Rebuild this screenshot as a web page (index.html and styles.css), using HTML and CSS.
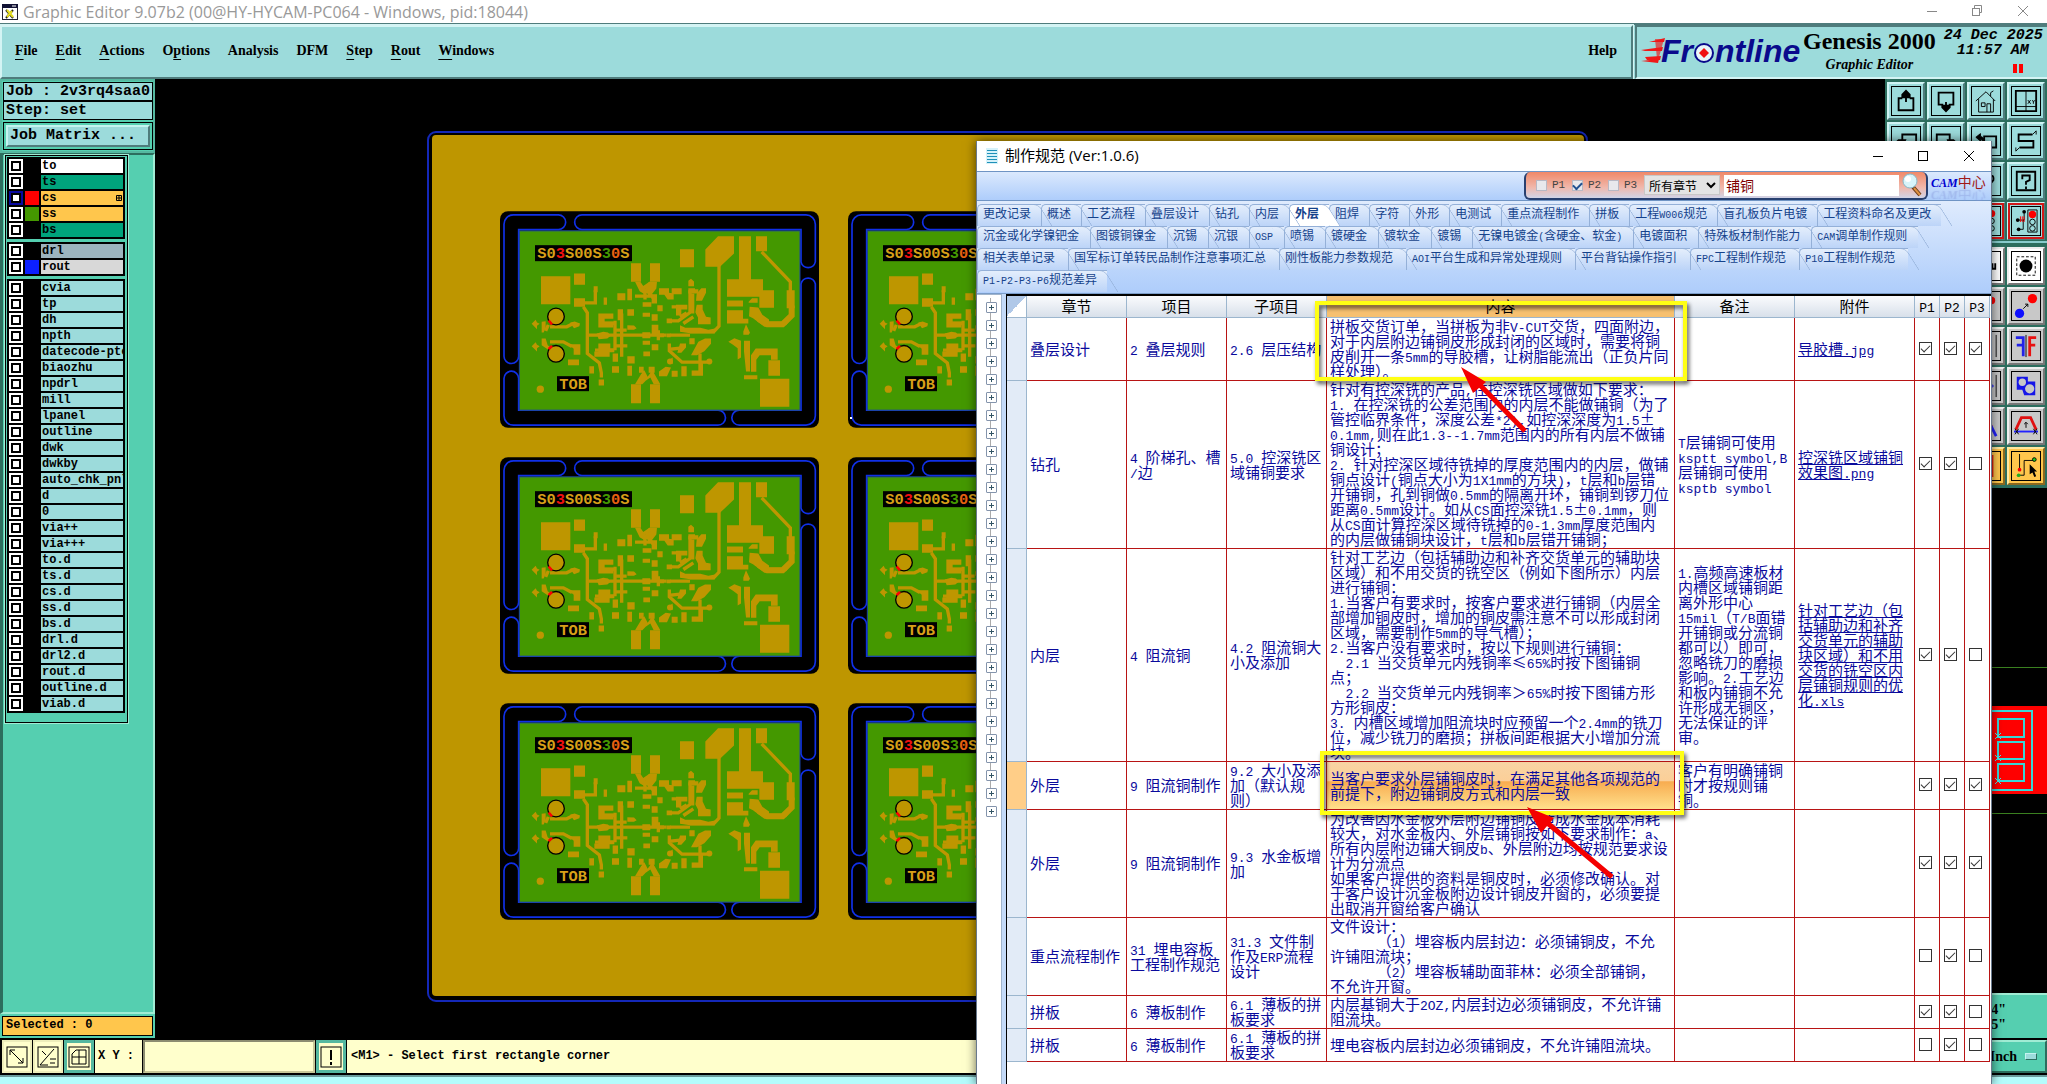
FILE: index.html
```html
<!DOCTYPE html>
<html lang="zh-CN">
<head>
<meta charset="utf-8">
<title>Graphic Editor 9.07b2</title>
<link rel="stylesheet" href="styles.css">
</head>
<body>
<header class="titlebar">
  <svg width="16" height="16" viewBox="0 0 16 16"><rect x=".5" y=".5" width="15" height="15" fill="#fff" stroke="#223"/><rect width="16" height="4" fill="#113"/><path d="M10 2h4" stroke="#fff"/><path d="M4 6l7 8M11 6l-7 8" stroke="#222" stroke-width="2"/><path d="M5 6l6 7M10 7l-5 6" stroke="#e8e020" stroke-width="2"/></svg>
  <span class="caption">Graphic Editor 9.07b2 (00@HY-HYCAM-PC064 - Windows, pid:18044)</span>
  <svg class="wincontrols" width="106" height="20" viewBox="0 0 106 20" fill="none" stroke="#888"><path d="M3 9.500h10M94 4l10 10M104 4l-10 10M50.500 6.500v-3h7v7h-2"/><rect x="48.500" y="6.500" width="7" height="7"/></svg>
</header>

<div class="menurow">
  <nav class="menubar">
    <button><u>F</u>ile</button><button><u>E</u>dit</button><button><u>A</u>ctions</button><button>O<u>p</u>tions</button><button>Analysis</button><button>DFM</button><button><u>S</u>tep</button><button><u>R</u>out</button><button><u>W</u>indows</button><button class="help">Help</button>
  </nav>
  <section class="brand">
    <svg width="162" height="44" viewBox="0 -5 162 44">
      <g fill="#f01818"><path d="M4 7l20-5-1 4H8zM0 14l22-3-1 4H4zM4 21l16-1-1 4H6zM0 25l18-2-1 4z"/><path d="M14 3h9l-6 22h-7l6-2z" opacity=".65"/></g>
      <g class="logo"><text x="20" y="26">Fr</text><text x="74" y="26">ntline</text></g>
      <circle cx="63" cy="17" r="9" fill="#e8f6f8" stroke="#0a0a8c" stroke-width="2"/><path d="M63 12l5 5-5 5-5-5z" fill="#f01010"/>
    </svg>
    <div class="product"><strong>Genesis 2000</strong><em>Graphic Editor</em></div>
    <div class="clock"><time>24 Dec 2025</time><time>11:57 AM</time><span class="pause"></span></div>
  </section>
</div>

<main class="workspace">
  <aside class="left">
    <div class="job">
      <div class="jobline">Job : 2v3rq4saa0</div>
      <div class="jobline">Step: set</div>
      <div class="matrix"><button>Job Matrix ...</button></div>
    </div>
    <div class="layerarea">
      <div class="layerframe">
        <div class="group">
          <label class="white"><input type="checkbox"><i></i><span>to</span></label>
          <label class="mask"><input type="checkbox"><i></i><span>ts</span></label>
          <label class="signal active"><input type="checkbox"><i class="red"></i><span>cs<svg width="8" height="14" viewBox="0 0 8 14" fill="none" stroke="#000"><path d="M1.500 4.500h5v5h-5zM4 4.500v5M1.500 7h5"/></svg></span></label>
          <label class="signal"><input type="checkbox"><i class="green"></i><span>ss</span></label>
          <label class="mask"><input type="checkbox"><i></i><span>bs</span></label>
        </div>
        <div class="group">
          <label class="drill"><input type="checkbox"><i></i><span>drl</span></label>
          <label class="rout"><input type="checkbox"><i class="blue"></i><span>rout</span></label>
        </div>
        <div class="group">
          <label><input type="checkbox"><i></i><span>cvia</span></label>
          <label><input type="checkbox"><i></i><span>tp</span></label>
          <label><input type="checkbox"><i></i><span>dh</span></label>
          <label><input type="checkbox"><i></i><span>npth</span></label>
          <label><input type="checkbox"><i></i><span>datecode-ptc</span></label>
          <label><input type="checkbox"><i></i><span>biaozhu</span></label>
          <label><input type="checkbox"><i></i><span>npdrl</span></label>
          <label><input type="checkbox"><i></i><span>mill</span></label>
          <label><input type="checkbox"><i></i><span>lpanel</span></label>
          <label><input type="checkbox"><i></i><span>outline</span></label>
          <label><input type="checkbox"><i></i><span>dwk</span></label>
          <label><input type="checkbox"><i></i><span>dwkby</span></label>
          <label><input type="checkbox"><i></i><span>auto_chk_pnl</span></label>
          <label><input type="checkbox"><i></i><span>d</span></label>
          <label><input type="checkbox"><i></i><span>0</span></label>
          <label><input type="checkbox"><i></i><span>via++</span></label>
          <label><input type="checkbox"><i></i><span>via+++</span></label>
          <label><input type="checkbox"><i></i><span>to.d</span></label>
          <label><input type="checkbox"><i></i><span>ts.d</span></label>
          <label><input type="checkbox"><i></i><span>cs.d</span></label>
          <label><input type="checkbox"><i></i><span>ss.d</span></label>
          <label><input type="checkbox"><i></i><span>bs.d</span></label>
          <label><input type="checkbox"><i></i><span>drl.d</span></label>
          <label><input type="checkbox"><i></i><span>drl2.d</span></label>
          <label><input type="checkbox"><i></i><span>rout.d</span></label>
          <label><input type="checkbox"><i></i><span>outline.d</span></label>
          <label><input type="checkbox"><i></i><span>viab.d</span></label>
        </div>
      </div>
    </div>
    <div class="selected">Selected : 0</div>
  </aside>

  <svg class="canvas">
    <defs>
      <symbol id="unit" viewBox="60 63 957 650">
        <rect x="60" y="63" width="957" height="650" rx="24" fill="#000"/>
        <g fill="none" stroke="#1030e8" stroke-width="5">
          <path d="M116 118H235a22 22 0 0 0 0-44H100a28 28 0 0 0-28 28V498a22 22 0 0 0 44 0z"/>
          <path d="M963 118H306a22 22 0 0 1 0-44H978a28 28 0 0 1 28 28V215a22 22 0 0 1-43 0z"/>
          <path d="M116 660H714a22 22 0 0 1 0 45H100a28 28 0 0 1-28-28V565a22 22 0 0 1 44 0z"/>
          <path d="M963 660H778a22 22 0 0 0 0 45H978a28 28 0 0 0 28-28V281a22 22 0 0 0-43 0z"/>
        </g>
        <rect x="118" y="122" width="842" height="538" fill="#449800" stroke="#1b45a0" stroke-width="3"/>
        <g fill="#be9600">
          <path d="M183 258h88v84h-88zM282 250h33v34h-33zM282 324h33v26h-33zM600 177h42v54h-42zM676 178l38-40h48v52l-42 40h-44zM777 138h36v129h36v33h33v53h-44v-33h-97v-53h36zM828 138h33v45h-33zM741 331h48v18h-48zM741 360h48v26h16v14h-64zM806 335l10-11h17v14h-27zM453 219h30v56h-30zM510 219h30v56h-30zM453 582h30v57h-30zM510 582h30v57h-30zM840 566h88v84h-88zM865 510h35v47h-35zM920 300h24v54h-24z"/>
          <path d="M412 309h24v21h-24zM442 296h14v34h-14zM341 288h12v18h-12zM371 322h10v22h-10zM355 370h45v16h-26v8h26v18h-45zM442 357h20v20h-20zM413 357h16v33h-16zM442 405l20 1 8 8-8 5h-20zM355 460h36v14h12v12h-14v14h-46v-16h12zM398 490h16v25h-16zM396 528h21v20h-21zM442 498h22v22h-22zM442 527h14v30h-14zM487 426h24v18h-24zM540 430h12v11h-12zM515 372h18v20h-18zM515 404h20v28h-20zM515 462h20v18h-20zM488 452h22v12h-22zM490 484h20v14h-20zM488 336h26v14h-26zM488 368h22v12h-22zM515 312h16v28h-16zM532 345h16v18h-16zM537 294h30v14l14 2v18h-18l-10-14h-16zM575 294h30v18h-30zM625 294h20v16h-20zM650 310l14-16h14v14l-12 24h-18zM588 344h34v14h-18v18h-16zM650 344h18v14l10 22 14 2v20h-38v-20l-8-16zM560 430h12v11h-12zM560 385h16v14h-16zM600 405l16 8h45l24 6 20-4v14h-75l-30-4zM600 460h18v12l-14 16h-12zM628 444h16v18h-16zM655 455l20-10h18v16l-20 22-22 12h-18zM655 515h14v42h-34v-16h20zM604 528h16v30h-16zM575 542h18v18h-18zM537 544l20-14 16 2-12 26h-24zM506 530h18v18h-18zM477 530h14v18h-14zM745 455l18-11 20 8v50l-10 6v-34l-14-10zM792 452h18v92h-12l-6-60zM813 545v-50l14-20h66v34h-20v-14h-34l-10 14v36zM792 555h40v12h-40zM790 424l8-22 12 26-4 6h-16zM265 462h36v32h-20v-18zM264 508h33v17h-33zM328 528h14v22h-14zM356 568h16v18h-16zM625 272l8-6 9 8v14h-17zM465 275h16l14 20 12-20h24l-2 20-14 18-10-10-10 10-16-10zM465 582l18-30 10-12 10 20 14-20 24 42h-20l-10-20-14 10-10 10zM185 395l12-2v20l-6 14h-6zM185 445h12l6 20 8 6-6 8-20-14zM155 401l12-12 4 8 8 4-8 6v10zM155 468l12-12 4 8 8 4-8 6v10z"/>
          <path d="M809 350l26 2 12 22 20 14v22h-14l-34-26-12-6zM270 398l14-4 16 6-2 8-16 6zM350 430l20-5 14 2 8 10-10 8-26 2zM676 513h22M564 512l14-10v20z"/>
          <circle cx="181" cy="597" r="11"/><circle cx="688" cy="514" r="9"/><circle cx="570" cy="514" r="9"/>
        </g>
        <g fill="none" stroke="#be9600" stroke-width="10">
          <path d="M717 225V408l-16 17H630M845 185l86 90v34M932 350v30l-16 20h-60M310 350l12 18V490l36 28 6 30v14M322 435H560M405 392V480M425 370V500M400 420h40M400 467h42M346 300v38h-34M210 410h50l20-10M210 455h40l26 14M205 404l-8 18M570 392h25l35-25V300M570 435h60M568 460v22l38 34h75M535 420v30M480 300l30-20M638 310v60M465 318h50M650 310v-8h-20M600 474l-36 4M600 380l20-12M495 300v28M655 396h30M575 350h30M660 490v30M500 300l25 30M365 400h35M345 480h30M640 380l-30 20"/>
        </g>
        <path d="M836 386l26 16h46l27-26v-30" fill="none" stroke="#be9600" stroke-width="18"/>
        <g fill="#be9600" stroke="#000" stroke-width="4"><circle cx="228" cy="379" r="25"/><circle cx="228" cy="491" r="25"/></g>
        <path d="M206 391l10 12M206 477l10-10" stroke="#f00" stroke-width="8"/>
        <rect x="165" y="165" width="291" height="48" fill="#000"/><rect x="231" y="558" width="96" height="45" fill="#000"/>
        <text class="silk" x="172" y="205">S0<tspan fill="#f01010">3</tspan>S00S<tspan fill="#449800">3</tspan><tspan fill="#e86010">0</tspan>S</text>
        <text class="silk" x="238" y="596">TOB</text>
      </symbol>
    </defs>
    <g transform="translate(-155 -79)">
      <rect x="428" y="132" width="1159" height="869" rx="8" fill="#000" stroke="#1428b8" stroke-width="2"/>
      <rect x="432" y="135" width="1152" height="861" rx="4" fill="#be9600"/>
      <use href="#unit" x="500" y="211" width="319" height="217"/>
      <use href="#unit" x="848" y="211" width="319" height="217"/>
      <use href="#unit" x="500" y="457" width="319" height="217"/>
      <use href="#unit" x="848" y="457" width="319" height="217"/>
      <use href="#unit" x="500" y="703" width="319" height="217"/>
      <use href="#unit" x="848" y="703" width="319" height="217"/>
      <rect x="850" y="417" width="2" height="2" fill="#fff"/>
    </g>
  </svg>

  <aside class="right">
    <div class="tools">
      <button aria-label="Up"><svg viewBox="0 0 26 26"><path d="M9 10H5v13h16V10h-4" class="k2"/><path d="M13 14V5M9 9V6l4-4 4 4v3z" class="k2 f"/></svg></button>
      <button aria-label="Down"><svg viewBox="0 0 26 26"><path d="M10 17H5V4h16v13h-5" class="k2"/><path d="M13 14v6M9 18h8v2l-4 4-4-4z" class="k2 f"/></svg></button>
      <button aria-label="Home"><svg viewBox="0 0 26 26"><path d="M2 13L13 3l10 10M5 11v14h16V11M18 8V4l3-2M8 15h4v4H8zM14 25v-9h4v9" class="k1"/></svg></button>
      <button aria-label="Coordinates"><svg viewBox="0 0 26 26"><path d="M2 2h22v22H2z" class="k2"/><path d="M13 2v22M2 19h22M15 12l3 4m0-4l-3 4M20 12l1 2 2-2m-2 2v2" class="k1"/></svg></button>
      <button aria-label="Left"><svg viewBox="0 0 26 26"><path d="M9 14V6h15v14H9v-3" class="k2"/><path d="M12 12H5l-3 3 3 3h4z" class="k2 f"/></svg></button>
      <button aria-label="Right"><svg viewBox="0 0 26 26"><path d="M17 14V6H3v14h14v-3" class="k2"/><path d="M15 12h6l3 3-3 3h-4z" class="k2 f"/></svg></button>
      <button aria-label="Previous"><svg viewBox="0 0 26 26"><path d="M11 14V8h13v12H11" class="k2"/><path d="M2 9l5-4v3q5 1 3 7-1-4-3-4v2z" class="k1 f"/></svg></button>
      <button aria-label="Serpentine"><svg viewBox="0 0 26 26"><path d="M20 6H5v7h16v7H6" class="k2"/><path d="M20 6l4-4m0 0v4M6 20l-4 4m0 0v-4" class="k1"/></svg></button>
    </div>
    <div class="tools side">
      <button aria-label="Info"><svg viewBox="0 0 26 26"><path d="M14 10q8-6 7 2l-4 5m0 3v2" class="k2"/></svg></button>
      <button aria-label="Help"><svg viewBox="0 0 26 26"><path d="M3 3h20v20H3z" class="k2"/><path d="M9 11V7h8v5l-4 2v3m0 2v3" class="k2"/></svg></button>
      <button class="alarm" aria-label="Stop net"><svg viewBox="0 0 26 26"><circle cx="19" cy="5" r="4" fill="red"/><circle cx="19" cy="13" r="3" class="k1"/><circle cx="19" cy="21" r="3" class="k1"/></svg></button>
      <button class="alarm" aria-label="Run net"><svg viewBox="0 0 26 26"><path d="M4 12h7M11 4v8h-1v10H5" class="k1"/><path d="M7 8v6m2-6v6m2-6v6" stroke="red"/><circle cx="4" cy="12" r="2" class="f"/><circle cx="11" cy="3" r="2" class="f"/><circle cx="5" cy="22" r="2" class="f"/><path d="M15 1h10v24H15z" class="k1"/><circle cx="20" cy="6" r="4" fill="red"/><circle cx="20" cy="14" r="3" class="k1"/><circle cx="20" cy="21" r="3" class="k1"/></svg></button>
    </div>
    <div class="tools side edit">
      <button class="pale" aria-label="Comb"><svg viewBox="0 0 26 26"><path d="M14 10v7m3-7v7m3-7v7m3-7v7M12 16h12" class="k2"/></svg></button>
      <button class="pale" aria-label="Pad"><svg viewBox="0 0 26 26"><path d="M3 3h20v20H3z" class="k1" stroke-dasharray="3 2"/><circle cx="13" cy="13" r="7" class="f"/></svg></button>
      <button aria-label="Point"><svg viewBox="0 0 26 26"><circle cx="19" cy="7" r="4" fill="red"/></svg></button>
      <button aria-label="Move"><svg viewBox="0 0 26 26"><circle cx="20" cy="5" r="5" fill="red"/><circle cx="6" cy="21" r="5" fill="#1010ff"/><path d="M10 16l5-5m-3 0h3v3" class="k1"/></svg></button>
      <button aria-label="Blank"><svg viewBox="0 0 26 26"><path d="M24 1v24" class="k1"/></svg></button>
      <button aria-label="Mirror"><svg viewBox="0 0 26 26"><path d="M13 1v24" class="k1"/><path d="M2 4h8v20M3 12h7" stroke="#2222e8" stroke-width="3" fill="none"/><path d="M24 4h-7v20M23 12h-6" stroke="#e81010" stroke-width="3" fill="none"/></svg></button>
      <button aria-label="Align"><svg viewBox="0 0 26 26"><path d="M24 1v24" class="k1"/><path d="M14 13h7m-3-3l3 3-3 3" stroke="#22f" fill="none"/></svg></button>
      <button aria-label="Surface"><svg viewBox="0 0 26 26"><path d="M3 3h12v5h8v15H11l-2-6H3z" fill="#1616e8"/><circle cx="9" cy="9" r="4" fill="#c8c8c8"/><circle cx="17" cy="16" r="5" fill="#c8c8c8"/></svg></button>
      <button aria-label="Angle"><svg viewBox="0 0 26 26"><path d="M14 2l5 12" stroke="red" stroke-width="3"/><path d="M18 12l6 12" stroke="#22f" stroke-width="3"/></svg></button>
      <button aria-label="Stretch"><svg viewBox="0 0 26 26"><path d="M2 17L8 4h10l6 13" stroke="#e01010" stroke-width="3" fill="none"/><path d="M0 19h26" stroke="#22f" stroke-width="2"/><path d="M13 15V9m-2 2l2-2 2 2M1 16l4 6m0-6l-4 6M21 16l4 6m0-6l-4 6" class="k1"/></svg></button>
      <button class="amber" aria-label="Select box"><svg viewBox="0 0 26 26"><path d="M12 2h8v22h-8" stroke="#e02010" stroke-width="2" fill="none"/></svg></button>
      <button class="amber" aria-label="Select net"><svg viewBox="0 0 26 26"><path d="M6 0v16M6 23h5V7h11" class="k1"/><circle cx="6" cy="17" r="2" fill="red"/><circle cx="5" cy="23" r="2" fill="#2a2"/><circle cx="22" cy="6" r="2" fill="#2c2" stroke="#000"/><path d="M17 11v11l3-2 2 5 2-1-2-5h3z" class="f"/></svg></button>
    </div>
    <svg class="overview" width="55" height="220" viewBox="0 0 55 220" fill="none"><path d="M0 27.500h55M0 173.500h55" stroke="#3a8020"/><rect y="66" width="55" height="88" fill="#f00"/><g stroke="#38d8d8" stroke-width="2"><rect x="-4" y="71" width="44" height="79"/><rect x="6" y="79" width="26" height="18"/><rect x="6" y="102" width="26" height="17"/><rect x="6" y="124" width="26" height="17"/></g><path d="M3 93l6 6m0-6l-6 6M3 115l6 6m0-6l-6 6M3 138l6 6m0-6l-6 6" stroke="#48e8e8"/></svg>
    <div class="coords">4"<br>5"</div>
  </aside>
</main>

<footer class="statusbar">
  <button class="sb" aria-label="Snap line"><svg viewBox="0 0 22 22"><rect x="1" y="1" width="20" height="20" class="k1"/><path d="M4 4l13 13m0-5v5h-5M4 9V4h5" class="k1"/></svg></button>
  <button class="sb" aria-label="Snap angle"><svg viewBox="0 0 22 22"><rect x="1" y="1" width="20" height="20" class="k1"/><path d="M3 19L17 3M3 19h8M5 5l4 4M13 13h6m-6 4h5" class="k1"/></svg></button>
  <button class="sb on" aria-label="Grid"><svg viewBox="0 0 22 22"><rect x="1" y="1" width="20" height="20" class="k1"/><path d="M4 18V8l4-4h10v14zM11 4v14M4 11h14" class="k1"/></svg></button>
  <label class="xy" for="xy">X Y :</label><input id="xy" type="text">
  <button class="sb on" aria-label="Apply"><svg viewBox="0 0 22 22"><rect x="1" y="1" width="20" height="20" class="k1"/><path d="M11 4v10m0 2v3" class="k2"/></svg></button>
  <p class="message">&lt;M1&gt; - Select first rectangle corner</p>
  <button class="units">Inch <i></i></button>
</footer>
<div class="strip"></div>

<section class="dialog">
  <header class="dlgtitle">
    <svg width="12" height="16" viewBox="0 0 12 16"><rect width="12" height="16" fill="#d6f2fa"/><path d="M1 2.500h10M1 5.500h10M1 8.500h10M1 11.500h10M1 14.500h10" stroke="#2090b8"/></svg>
    <span>制作规范 (Ver:1.0.6)</span>
    <svg class="wincontrols" width="106" height="20" viewBox="0 0 106 20" fill="none" stroke="#000"><path d="M3 10.500h10M94 5l10 10M104 5l-10 10"/><rect x="48.500" y="5.500" width="9" height="9"/></svg>
  </header>
  <div class="dlgbar">
    <form class="search">
      <label><input type="checkbox"><span>P1</span></label><label><input type="checkbox" checked><span>P2</span></label><label><input type="checkbox"><span>P3</span></label>
      <select aria-label="章节"><option>所有章节</option></select>
      <input type="text" aria-label="搜索" value="铺铜">
      <button type="button" aria-label="查找"><svg width="22" height="24" viewBox="0 0 22 24"><path d="M11 14l7 8" stroke="#6a3a18" stroke-width="4"/><path d="M12 15l6 7" stroke="#e09040" stroke-width="2"/><circle cx="8" cy="8" r="7" fill="#d8f4fa" stroke="#88b8c8"/><circle cx="6" cy="6" r="3" fill="#fff"/></svg></button>
    </form>
    <div class="cam"><em>CAM</em><span>中心</span></div>
  </div>
  <nav class="tabs">
    <div><button>更改记录</button><button>概述</button><button>工艺流程</button><button>叠层设计</button><button>钻孔</button><button>内层</button><button class="cur">外层</button><button>阻焊</button><button>字符</button><button>外形</button><button>电测试</button><button>重点流程制作</button><button>拼板</button><button>工程<s>W006</s>规范</button><button>盲孔板负片电镀</button><button>工程资料命名及更改</button></div>
    <div class="row2"><button>沉金或化学镍钯金</button><button>图镀铜镍金</button><button>沉锡</button><button>沉银</button><button><s>OSP</s></button><button>喷锡</button><button>镀硬金</button><button>镀软金</button><button>镀锡</button><button>无镍电镀金<s>(</s>含硬金、软金<s>)</s></button><button>电镀面积</button><button>特殊板材制作能力</button><button><s>CAM</s>调单制作规则</button></div>
    <div class="row3"><button>相关表单记录</button><button>国军标订单转民品制作注意事项汇总</button><button>刚性板能力参数规范</button><button><s>AOI</s>平台生成和异常处理规则</button><button>平台背钻操作指引</button><button><s>FPC</s>工程制作规范</button><button><s>P10</s>工程制作规范</button></div>
    <div><button><s>P1-P2-P3-P6</s>规范差异</button></div>
  </nav>
  <div class="dlgbody">
    <ul class="tree"><li></li><li></li><li></li><li></li><li></li><li></li><li></li><li></li><li></li><li></li><li></li><li></li><li></li><li></li><li></li><li></li><li></li><li></li><li></li><li></li><li></li><li></li><li></li><li></li><li></li><li></li><li></li><li></li><li></li></ul>
    <div class="gridwrap">
    <table>
      <colgroup><col class="c20"><col class="c100"><col class="c100"><col class="c100"><col><col class="c120"><col class="c120"><col class="c25"><col class="c25"><col class="c25"></colgroup>
      <thead><tr><th class="corner"></th><th>章节</th><th>项目</th><th>子项目</th><th class="hot">内容</th><th>备注</th><th>附件</th><th><s>P1</s></th><th><s>P2</s></th><th><s>P3</s></th></tr></thead>
      <tbody>
      <tr><th></th><td>叠层设计</td><td><s>2 </s>叠层规则</td><td><s>2.6 </s>层压结构</td>
        <td>拼板交货订单，当拼板为非<s>V-CUT</s>交货，四面附边，<br>对于内层附边铺铜皮形成封闭的区域时，需要将铜<br>皮削开一条<s>5mm</s>的导胶槽，让树脂能流出（正负片同<br>样处理）。</td>
        <td></td><td><a href="#">导胶槽<s>.jpg</s></a></td><td><input type="checkbox" aria-label="P1" checked></td><td><input type="checkbox" aria-label="P2" checked></td><td><input type="checkbox" aria-label="P3" checked></td></tr>
      <tr><th></th><td>钻孔</td><td><s>4 </s>阶梯孔、槽<br><s>/</s>边</td><td><s>5.0 </s>控深铣区<br>域铺铜要求</td>
        <td>针对有控深铣的产品<s>,</s>在控深铣区域做如下要求：<br><s>1. </s>在控深铣的公差范围内的内层不能做铺铜（为了<br>管控临界条件，深度公差<s>*2),</s>如控深深度为<s>1.5</s>±<br><s>0.1mm,</s>则在此<s>1.3--1.7mm</s>范围内的所有内层不做铺<br>铜设计；<br><s>2. </s>针对控深区域待铣掉的厚度范围内的内层，做铺<br>铜点设计<s>(</s>铜点大小为<s>1X1mm</s>的方块<s>)</s>，<s>t</s>层和<s>b</s>层错<br>开铺铜，孔到铜做<s>0.5mm</s>的隔离开环，铺铜到锣刀位<br>距离<s>0.5mm</s>设计。如从<s>CS</s>面控深铣<s>1.5</s>±<s>0.1mm</s>，则<br>从<s>CS</s>面计算控深区域待铣掉的<s>0-1.3mm</s>厚度范围内<br>的内层做铺铜块设计，<s>t</s>层和<s>b</s>层错开铺铜；</td>
        <td><s>T</s>层铺铜可使用<br><s>ksptt symbol,B</s><br>层铺铜可使用<br><s>ksptb symbol</s></td><td><a href="#">控深铣区域铺铜<br>效果图<s>.png</s></a></td><td><input type="checkbox" aria-label="P1" checked></td><td><input type="checkbox" aria-label="P2" checked></td><td><input type="checkbox" aria-label="P3"></td></tr>
      <tr><th></th><td>内层</td><td><s>4 </s>阻流铜</td><td><s>4.2 </s>阻流铜大<br>小及添加</td>
        <td>针对工艺边（包括辅助边和补齐交货单元的辅助块<br>区域）和不用交货的铣空区（例如下图所示）内层<br>进行铺铜：<br><s>1.</s>当客户有要求时，按客户要求进行铺铜（内层全<br>部增加铜皮时，增加的铜皮需注意不可以形成封闭<br>区域，需要制作<s>5mm</s>的导气槽）；<br><s>2.</s>当客户没有要求时，按以下规则进行铺铜：<br><s>  2.1 </s>当交货单元内残铜率≤<s>65%</s>时按下图铺铜<br>点；<br><s>  2.2 </s>当交货单元内残铜率＞<s>65%</s>时按下图铺方形<br>方形铜皮：<br><s>3. </s>内槽区域增加阻流块时应预留一个<s>2.4mm</s>的铣刀<br>位，减少铣刀的磨损；拼板间距根据大小增加分流<br>块。</td>
        <td><s>1.</s>高频高速板材<br>内槽区域铺铜距<br>离外形中心<br><s>15mil</s>（<s>T/B</s>面错<br>开铺铜或分流铜<br>都可以）即可，<br>忽略铣刀的磨损<br>影响。<s>2.</s>工艺边<br>和板内铺铜不允<br>许形成无铜区，<br>无法保证的评<br>审。</td><td><a href="#">针对工艺边（包<br>括辅助边和补齐<br>交货单元的辅助<br>块区域）和不用<br>交货的铣空区内<br>层铺铜规则的优<br>化<s>.xls</s></a></td><td><input type="checkbox" aria-label="P1" checked></td><td><input type="checkbox" aria-label="P2" checked></td><td><input type="checkbox" aria-label="P3"></td></tr>
      <tr class="current"><th></th><td>外层</td><td><s>9 </s>阻流铜制作</td><td><s>9.2 </s>大小及添<br>加（默认规<br>则）</td>
        <td class="cell">当客户要求外层铺铜皮时，在满足其他各项规范的<br>前提下，附边铺铜皮方式和内层一致</td>
        <td>客户有明确铺铜<br>时才按规则铺<br>铜。</td><td></td><td><input type="checkbox" aria-label="P1" checked></td><td><input type="checkbox" aria-label="P2" checked></td><td><input type="checkbox" aria-label="P3" checked></td></tr>
      <tr><th></th><td>外层</td><td><s>9 </s>阻流铜制作</td><td><s>9.3 </s>水金板增<br>加</td>
        <td>为改善因水金板外层附边铺铜皮造成水金成本消耗<br>较大，对水金板内、外层铺铜按如下要求制作：<s>a</s>、<br>所有内层附边铺大铜皮<s>b</s>、外层附边均按规范要求设<br>计为分流点<br>如果客户提供的资料是铜皮时，必须修改确认。对<br>于客户设计沉金板附边设计铜皮开窗的，必须要提<br>出取消开窗给客户确认</td>
        <td></td><td></td><td><input type="checkbox" aria-label="P1" checked></td><td><input type="checkbox" aria-label="P2" checked></td><td><input type="checkbox" aria-label="P3" checked></td></tr>
      <tr><th></th><td>重点流程制作</td><td><s>31 </s>埋电容板<br>工程制作规范</td><td><s>31.3 </s>文件制<br>作及<s>ERP</s>流程<br>设计</td>
        <td>文件设计：<br><s>      </s>（<s>1</s>）埋容板内层封边：必须铺铜皮，不允<br>许铺阻流块；<br><s>      </s>（<s>2</s>）埋容板辅助面菲林：必须全部铺铜，<br>不允许开窗。</td>
        <td></td><td></td><td><input type="checkbox" aria-label="P1"></td><td><input type="checkbox" aria-label="P2" checked></td><td><input type="checkbox" aria-label="P3"></td></tr>
      <tr><th></th><td>拼板</td><td><s>6 </s>薄板制作</td><td><s>6.1 </s>薄板的拼<br>板要求</td>
        <td>内层基铜大于<s>2OZ,</s>内层封边必须铺铜皮，不允许铺<br>阻流块。</td>
        <td></td><td></td><td><input type="checkbox" aria-label="P1" checked></td><td><input type="checkbox" aria-label="P2" checked></td><td><input type="checkbox" aria-label="P3"></td></tr>
      <tr><th></th><td>拼板</td><td><s>6 </s>薄板制作</td><td><s>6.1 </s>薄板的拼<br>板要求</td>
        <td>埋电容板内层封边必须铺铜皮，不允许铺阻流块。</td>
        <td></td><td></td><td><input type="checkbox" aria-label="P1"></td><td><input type="checkbox" aria-label="P2" checked></td><td><input type="checkbox" aria-label="P3"></td></tr>
      </tbody>
    </table>
    </div>
  </div>
  <svg class="marks" fill="none">
    <g class="box"><rect x="340" y="162" width="368" height="76"/><rect x="345" y="612" width="360" height="60"/></g>
    <g stroke="#f40000" stroke-width="5"><path d="M500 241l48 49M568 680l67 56"/></g>
    <path d="M484 226l25 15-13 11zM550 666l27 11-13 15z" fill="#f40000"/>
  </svg>
</section>
</body>
</html>
```
FILE: styles.css
```css
* { box-sizing: border-box; }
body { margin: 0; height: 100vh; display: flex; flex-direction: column; overflow: hidden; background: #000; position: relative; }
button { font: inherit; color: inherit; margin: 0; padding: 0; border: 0; background: none; }
.k1 { fill: none; stroke: #000; stroke-width: 1; }
.k2 { fill: none; stroke: #000; stroke-width: 2; }
.f, .k1.f, .k2.f { fill: #000; }
.wincontrols { margin-left: auto; }

.titlebar { flex: none; height: 23px; padding: 0 17px 0 2px; display: flex; align-items: center; gap: 5px; background: #fff; color: #999; font: 16px/22px "Open Sans", "Noto Sans", sans-serif; }

.menurow { flex: none; height: 56px; display: flex; background: #9cdbdb; color: #000; border-top: 2px solid #4f7c7c; font: bold 14px/16px "Liberation Serif", serif; }
.menubar { flex: 1; display: flex; align-items: center; gap: 18px; padding: 0 14px 2px 13px; border: 2px solid #d4f4f4; border-right-color: #4f7c7c; border-bottom-color: #4f7c7c; outline: 1px solid #d4f4f4; }
.menubar u { text-underline-offset: 4px; }
.help { margin-left: auto; }
.brand { flex: none; width: 412px; margin-left: 2px; padding-left: 4px; display: flex; border: 2px solid #4f7c7c; border-right: 0; border-bottom-color: #d4f4f4; }
.brand > svg { margin-top: 4px; flex: none; }
.logo { font: italic bold 32px "Liberation Sans", sans-serif; fill: #0a0a8c; }
.product { display: flex; flex-direction: column; align-items: center; white-space: nowrap; }
.product strong { font-size: 24px; line-height: 28px; }
.product em { line-height: 20px; }
.clock { display: flex; flex-direction: column; align-items: flex-end; margin-left: 8px; font: italic bold 15px/15px "Liberation Mono", monospace; white-space: nowrap; padding-top: 1px; }
.clock time + time { margin-right: 14px; }
.pause { width: 10px; height: 9px; margin: 6px 20px 0 0; border: solid #f00; border-width: 0 4px; }

.workspace { flex: 1; min-height: 0; display: flex; background: #000; }
.left { flex: none; width: 155px; display: flex; flex-direction: column; background: #55cfb0; font: bold 12px/14px "Liberation Mono", monospace; }
.job { font-size: 15px; line-height: 18px; border: 2px solid #55b8a0; padding: 1px 0 1px 1px; }
.jobline { height: 19px; padding-left: 2px; border: 1px solid #000; background: #9cdbdb; white-space: nowrap; }
.matrix { border: 1px solid #000; padding: 2px; margin-top: 2px; }
.matrix button { display: block; width: 100%; height: 22px; text-align: left; padding-left: 2px; background: #9cdbdb; border: 2px solid #c4f4f0; border-right-color: #4f7c7c; border-bottom-color: #4f7c7c; }
.layerarea { flex: 1; border: 2px solid #2c6e5e; border-left-width: 3px; border-right-color: #a0ecd4; border-bottom-color: #a0ecd4; }
.layerframe { width: 123px; padding: 1px 1px 9px; display: flex; flex-direction: column; gap: 3px; border: 1px solid #000; outline: 1px solid #a0ecd4; margin-left: 2px; }
.group { width: 118px; padding: 1px 2px; background: #000; }
.group label { display: flex; gap: 2px; height: 16px; padding: 1px 0; }
.group input { appearance: none; margin: 0; width: 14px; height: 14px; border: 2px solid #fff; background: #fff; box-shadow: inset 0 0 0 2px #000; }
.active input { border-color: #0808a0; }
.group i { width: 14px; }
.group .red { background: #f00; }
.group .green { background: #449800; }
.group .blue { background: #0c20ff; }
.group span { flex: 1; min-width: 0; padding-left: 1px; overflow: hidden; white-space: nowrap; background: #9cdbdb; display: flex; justify-content: space-between; }
.group .white span { background: #fff; }
.group .mask span { background: #00a47c; }
.group .signal span { background: #ffc64c; }
.group .drill span { background: #9cb4be; }
.group .rout span { background: #d8d8d8; }
.selected { margin: 2px; height: 20px; line-height: 17px; padding-left: 3px; border: 1px solid #000; background: #ffc64c; }
.canvas { flex: 1; min-width: 0; height: 100%; }
.silk { font: bold 46px "Liberation Mono", monospace; fill: #d8a018; }

.right { flex: none; width: 163px; display: flex; flex-direction: column; align-items: flex-end; }
.tools { display: grid; grid-template-columns: repeat(4, 38px); gap: 2px; padding: 3px 2px 1px; background: #2c6e5e; }
.tools button { height: 38px; padding: 3px; background: #9cdbdb; border: 2px solid #d0f4f4; border-right-color: #4f7c7c; border-bottom-color: #4f7c7c; }
.tools svg { display: block; width: 28px; height: 28px; padding: 2px; outline: 1px solid #000; }
.side { grid-template-columns: repeat(2, 38px); padding-top: 1px; }
.edit { padding-top: 4px; padding-bottom: 3px; border-top: 2px solid #8cc; }
.edit button { background: #c8c8c8; border-color: #eee #777 #777 #eee; }
.tools .pale { background: #fff; }
.tools .alarm { outline: 2px solid #d01818; outline-offset: -3px; }
.tools .amber { background: #ffc64c; border-color: #ffe8a0 #8a6820 #8a6820 #ffe8a0; }
.overview { flex: none; margin-top: 152px; }
.coords { width: 100%; margin-top: auto; height: 45px; padding: 7px 41px 0 0; text-align: right; background: #55cfb0; border-top: 2px solid #a0ecd4; font: bold 14px/15px "Liberation Serif", serif; }

.statusbar { flex: none; height: 37px; padding: 2px 0 2px 2px; display: flex; gap: 1px; background: #000; font: bold 12px/33px "Liberation Mono", monospace; }
.sb { width: 30px; background: #ffffcc; border: 2px solid #eeeebb; }
.sb svg { display: block; width: 22px; height: 22px; margin: auto; }
.on { border: 3px solid #55b8a0; }
.xy { width: 47px; padding-left: 3px; background: #ffffcc; }
.statusbar input { width: 172px; background: #ffffcc; border: 2px solid #8c8c70; border-right-color: #c8c898; border-bottom-color: #c8c898; padding: 0 6px; font: inherit; }
.message { flex: 1; margin: 0; padding-left: 4px; background: #ffffcc; }
.units { flex: none; width: 120px; padding-right: 8px; display: flex; align-items: center; justify-content: flex-end; gap: 8px; background: #55cfb0; border: 2px solid #a0ecd4; border-right-color: #2c6e5e; border-bottom-color: #2c6e5e; font: bold 14px/16px "Liberation Serif", serif; }
.units i { width: 12px; height: 7px; background: #9cdbdb; border: 1px solid #c4f4f0; border-right-color: #2c6e5e; border-bottom-color: #2c6e5e; }
.strip { flex: none; height: 9px; border-top: 2px solid #6a9c9c; background: #b4fcfc; }

.dialog { position: absolute; left: 976px; right: 55px; top: 141px; bottom: 0; display: flex; flex-direction: column; background: #fff; border: 1px solid #68788c; border-width: 0 1px; box-shadow: 0 0 10px #0009; color: #000; font: 15px/15px "Noto Sans CJK SC", sans-serif; }
.dlgtitle { flex: none; height: 30px; padding: 0 15px 1px 9px; display: flex; align-items: center; gap: 7px; font-family: "Open Sans", "Noto Sans CJK SC", sans-serif; }
.dlgbar { flex: none; height: 30px; padding-right: 3px; display: flex; justify-content: flex-end; background: linear-gradient(#dbe9fd, #aecdfb); border: 1px solid #6f94c4; border-width: 1px 0; }
.search { display: flex; align-items: center; width: 404px; padding: 0 2px 0 10px; background: linear-gradient(#f08868, #f0b8ac 60%, #d0d4e8); border: 1px solid #284070; border-width: 0 2px 2px; border-radius: 6px; }
.search label { display: flex; align-items: center; gap: 5px; width: 36px; flex: none; font: 11px/12px "Liberation Mono", monospace; color: #444; }
.search label input { appearance: none; flex: none; margin: 0; width: 11px; height: 11px; background: #e8e8ec; border: 1px solid #b8b8c4; display: grid; place-items: center; }
.search label input:checked::after { content: ""; width: 7px; height: 4px; border: solid #205090; border-width: 0 0 2px 2px; transform: rotate(-45deg); }
.search select { width: 76px; height: 20px; padding: 0; border: 1px solid #c8c8c8; background: #e4e4e4; font: 12px "Noto Sans CJK SC", sans-serif; }
.search > input { flex: 1; min-width: 0; height: 21px; margin: 0 3px 0 4px; padding: 0 2px; border: 0; background: #fff; color: #800000; font: 14px "Noto Sans CJK SC", sans-serif; }
.search button { display: flex; }
.cam { width: 60px; padding: 1px 0 0 3px; font: 14px/16px "Noto Sans CJK SC", sans-serif; color: #a01818; white-space: nowrap; text-shadow: 0 12px 1px #8090d866; }
.cam em { font: italic bold 12px/16px "Liberation Serif", serif; color: #0000d0; }

.tabs { flex: none; height: 93px; padding-top: 3px; background: linear-gradient(#dfebfd, #aecdfb); font-size: 12px; color: #15428b; border-bottom: 1px solid #7a9cc8; }
.tabs div { display: flex; height: 22px; overflow: hidden; }
.tabs button { position: relative; height: 22px; padding: 0 10px 6px 5px; white-space: nowrap; line-height: 15px; border: 1px solid #94b0d8; border-width: 1px 0 0 1px; border-radius: 5px 0 0 0; background: linear-gradient(#e4eefc, #bcd4f8); }
.tabs .row2 button { padding-right: 11px; }
.tabs .row3 button { padding-right: 13px; }
.tabs button::after { content: ""; position: absolute; z-index: 1; top: -1px; right: -5px; width: 10px; height: 22px; border: 1px solid #94b0d8; border-width: 1px 1px 0 0; border-top-right-radius: 6px; transform: skewX(32deg); }
.tabs .cur { background: #fff; font-weight: bold; }
.tabs .cur::after { background: #fff; }
s { text-decoration: none; font: 13px/1px "Liberation Mono", monospace; white-space: pre; }
.tabs s { font-size: 10px; }

.dlgbody { flex: 1; min-height: 0; display: flex; background: #c4daf8; }
.tree { width: 25px; margin: 0 4px 0 0; padding: 3px 0 0; list-style: none; background: #fff; border: 1px solid #a0b4cc; border-width: 1px 1px 0 0; }
.tree li { height: 18px; margin-left: 9px; display: grid; align-items: center; background: linear-gradient(90deg, #0000 4px, #aaa 4px, #aaa 5px, #0000 5px); }
.tree li:last-child { background: none; }
.tree li::before { content: ""; width: 9px; height: 9px; border: 1px solid #8494ac; border-radius: 1px; background: linear-gradient(#356, #356) center/5px 1px no-repeat, linear-gradient(#356, #356) center/1px 5px no-repeat, #fff; }
.gridwrap { flex: 1; min-width: 0; border: 1px solid #000; border-width: 2px 0 0 1px; background: #fff; overflow: hidden; }
table { width: calc(100% - 1px); table-layout: fixed; border-collapse: separate; border-spacing: 0; color: #0a0a9c; }
.c20 { width: 20px; } .c25 { width: 25px; } .c100 { width: 100px; } .c120 { width: 120px; }
th { padding: 0 0 2px; height: 22px; color: #000; font-weight: normal; background: linear-gradient(#fafbfd, #d8e0ea); border: 1px solid #9cb6ce; border-width: 0 1px 1px 0; }
tbody th { background: #e2ebf7; }
th.hot { background: #f6c070; }
.corner { background: linear-gradient(135deg, #b0c8e8 50%, #fff 50%); }
.current th { background: #ffce88; }
td { padding: 0 0 2px 3px; white-space: nowrap; vertical-align: middle; border: 1px solid #b81414; border-width: 0 1px 1px 0; }
.cell { background: linear-gradient(#f8d4a4, #fbcf98 40%, #f8ac50 42%, #ffe08c); }
td a { color: #0a0a9c; text-underline-offset: 1px; }
td input { appearance: none; display: grid; place-items: center; width: 13px; height: 13px; margin: 0 0 0 1px; border: 1px solid #333; background: #fff; }
td input:checked::after { content: ""; width: 8px; height: 4px; margin-bottom: 2px; border: solid #333; border-width: 0 0 1px 1px; transform: rotate(-45deg); }
.marks { position: absolute; left: 0; top: 0; width: 100%; height: 100%; pointer-events: none; }
.box { stroke: #ffff14; stroke-width: 4; filter: drop-shadow(2px 3px 2px #000a); }
```
